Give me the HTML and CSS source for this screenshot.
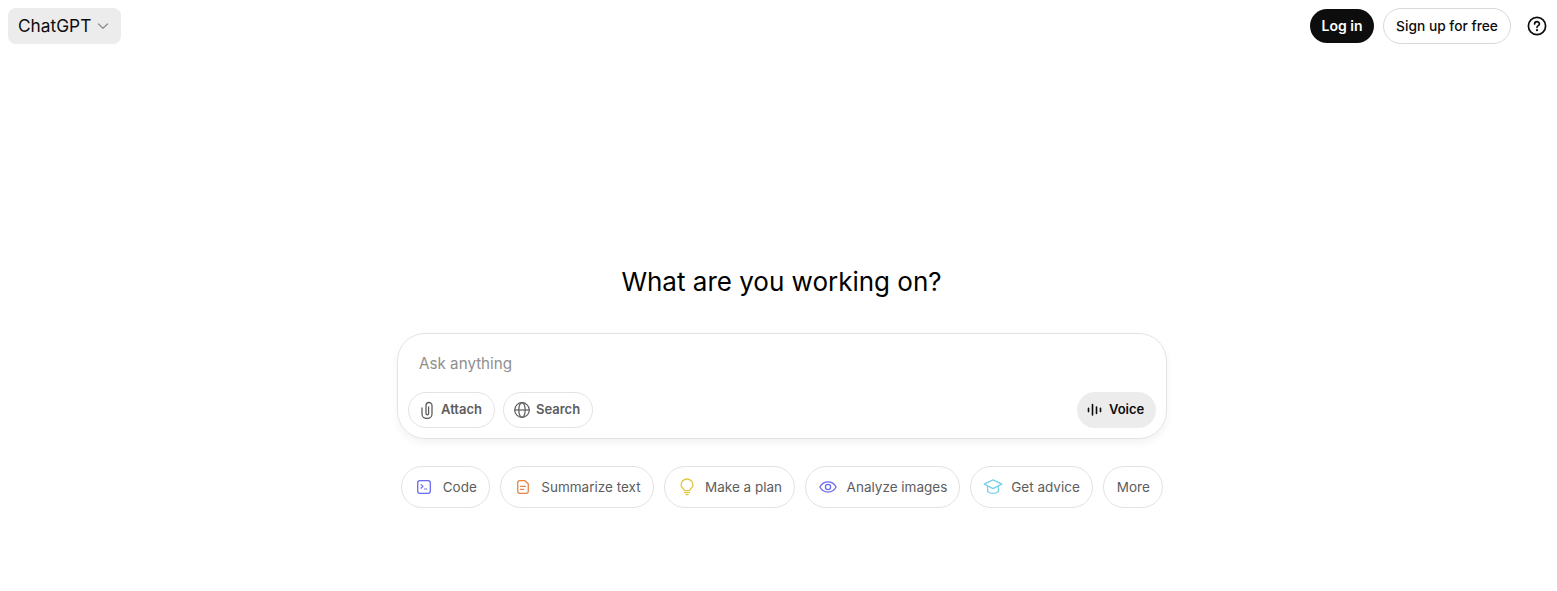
FILE: index.html
```html
<!DOCTYPE html>
<html lang="en">
<head>
  <meta charset="UTF-8">
  <title>ChatGPT</title>
  <link rel="stylesheet" href="styles.css">
</head>
<body>

  <header class="topbar">
    <div class="model-btn">
      <span class="label">ChatGPT</span>
      <svg class="chevron" width="12" height="12" viewBox="0 0 12 12" fill="none"><path d="M1.500 4 6 8.300 10.500 4" stroke="#8f8f8f" stroke-width="1.300" stroke-linecap="round" stroke-linejoin="round"/></svg>
    </div>
    <div class="top-actions">
      <button class="login">Log in</button>
      <button class="signup">Sign up for free</button>
      <svg class="help" width="20" height="20" viewBox="0 0 20 20" fill="none">
        <circle cx="10" cy="10" r="8.600" stroke="#0d0d0d" stroke-width="1.700"/>
        <path d="M7.600 8a2.400 2.400 0 0 1 4.800 0c0 1.600-2.400 1.700-2.400 3.300" stroke="#0d0d0d" stroke-width="1.700" stroke-linecap="round"/>
        <circle cx="10" cy="14.200" r="1.100" fill="#0d0d0d"/>
      </svg>
    </div>
  </header>

  <main class="main">
    <h1 class="title">What are you working on?</h1>

    <div class="composer">
      <div class="placeholder">Ask anything</div>
      <div class="composer-row">
        <div class="tools">
          <button class="tool">
            <svg width="18" height="18" viewBox="0 0 18 18" fill="none"><path d="M4 7v6a5 4.500 0 0 0 10 0V4.500a3 3 0 0 0-6 0v8a1.300 1.300 0 0 0 2.600 0V6" stroke="#5d5d5d" stroke-width="1.300" stroke-linecap="round"/></svg>
            <span class="label">Attach</span>
          </button>
          <button class="tool">
            <svg width="18" height="18" viewBox="0 0 18 18" fill="none"><circle cx="9" cy="9" r="7.300" stroke="#5d5d5d" stroke-width="1.200"/><ellipse cx="9" cy="9" rx="3.200" ry="7.300" stroke="#5d5d5d" stroke-width="1.200"/><path d="M1.700 9h14.600" stroke="#5d5d5d" stroke-width="1.200"/></svg>
            <span class="label">Search</span>
          </button>
        </div>
        <button class="voice">
          <svg width="16" height="16" viewBox="0 0 16 16" fill="none"><path d="M1.500 6.400v3.200M5.500 2.500v10.500M9.500 5v6.500M13.500 6.400v3.200" stroke="#0d0d0d" stroke-width="1.600" stroke-linecap="round"/></svg>
          <span class="label">Voice</span>
        </button>
      </div>
    </div>

    <div class="chips">
      <div class="chip">
        <svg width="18" height="18" viewBox="0 0 18 18" fill="none"><rect x="2.700" y="2.700" width="12.600" height="12.600" rx="2.200" stroke="#6a6af4" stroke-width="1.300"/><path d="M6 6.600 8 8.400 6 10.200M9.600 11h2.200" stroke="#6a6af4" stroke-width="1.200" stroke-linecap="round" stroke-linejoin="round"/></svg>
        Code
      </div>
      <div class="chip">
        <svg width="18" height="18" viewBox="0 0 18 18" fill="none"><path d="M5.900 2.700h5.100l3.300 3.300v7.100a2.200 2.200 0 0 1-2.200 2.200H5.900a2.200 2.200 0 0 1-2.200-2.200V4.900A2.200 2.200 0 0 1 5.900 2.700Z" stroke="#e9844a" stroke-width="1.300" stroke-linejoin="round"/><path d="M6.400 8.400h5M6.400 11.400h3.200" stroke="#e9844a" stroke-width="1.200" stroke-linecap="round"/></svg>
        Summarize text
      </div>
      <div class="chip">
        <svg width="18" height="18" viewBox="0 0 18 18" fill="none"><path d="M6.400 12.600c0-1.600-3.400-2.400-3.400-5.600a6 6 0 0 1 12 0c0 3.200-3.400 4-3.400 5.600Z" stroke="#e2c541" stroke-width="1.300" stroke-linejoin="round"/><path d="M6.600 14.700h4.800M8 16.700h2" stroke="#e2c541" stroke-width="1.300" stroke-linecap="round"/></svg>
        Make a plan
      </div>
      <div class="chip">
        <svg width="18" height="18" viewBox="0 0 18 18" fill="none"><path d="M.9 9C2.600 5.800 5.500 3.900 9 3.900s6.400 1.900 8.100 5.100c-1.700 3.200-4.600 5.100-8.100 5.100S2.600 12.200.9 9Z" stroke="#6a6af4" stroke-width="1.300" stroke-linejoin="round"/><circle cx="9" cy="9" r="2.600" stroke="#6a6af4" stroke-width="1.300"/></svg>
        Analyze images
      </div>
      <div class="chip chip-cap">
        <svg width="20" height="18" viewBox="0 0 20 18" fill="none"><path d="M10 1.800 18.800 6.200 10 10.600 1.200 6.200Z" stroke="#76d0eb" stroke-width="1.300" stroke-linejoin="round"/><path d="M4.600 8.600v4.800c1.500 1.300 3.300 2 5.400 2s3.900-.7 5.400-2V8.600" stroke="#76d0eb" stroke-width="1.300" stroke-linecap="round"/></svg>
        Get advice
      </div>
      <div class="chip">More</div>
    </div>
  </main>

</body>
</html>
```

FILE: styles.css
```css
* {
  box-sizing: border-box;
}

body {
  font-family: Inter, "Liberation Sans", sans-serif;
  margin: 0;
  height: 591px;
  overflow: hidden;
  background-color: #ffffff;
  color: #0d0d0d;
}

button {
  font-family: inherit;
  padding: 0;
  cursor: pointer;
}

svg {
  flex-shrink: 0;
}

.label {
  margin-bottom: 2px;
}

.topbar {
  display: flex;
  justify-content: space-between;
  align-items: center;
  height: 52px;
  padding: 0 10px 0 8px;
}

.model-btn {
  display: flex;
  align-items: center;
  gap: 6px;
  width: 113px;
  height: 36px;
  padding: 0 0 0 10px;
  background-color: #ececec;
  border-radius: 8px;
  font-size: 17.3px;
}

.top-actions {
  display: flex;
  align-items: center;
}

.login {
  width: 64px;
  height: 34px;
  padding-bottom: 2px;
  border: none;
  border-radius: 17px;
  background-color: #0d0d0d;
  color: #ffffff;
  font-size: 14px;
  font-weight: 600;
}

.signup {
  width: 128px;
  height: 36px;
  margin-left: 9px;
  border: 1px solid #d9d9d9;
  border-radius: 18px;
  background-color: #ffffff;
  color: #0d0d0d;
  font-size: 13.75px;
  font-weight: 500;
}

.help {
  margin-left: 16px;
}

.main {
  display: flex;
  flex-direction: column;
  align-items: center;
  padding-top: 211px;
  padding-left: 7px;
}

.title {
  margin: 0 0 0 -1px;
  font-size: 26px;
  line-height: 38px;
  font-weight: 400;
  color: #000000;
}

.composer {
  width: 770px;
  height: 106px;
  margin-top: 32px;
  padding: 10px;
  border: 1px solid #e3e3e3;
  border-radius: 28px;
  box-shadow: 0 4px 8px rgba(0, 0, 0, 0.05);
  display: flex;
  flex-direction: column;
  justify-content: space-between;
}

.placeholder {
  padding: 10px 0 0 11px;
  font-size: 15.2px;
  line-height: 20px;
  color: #8f8f8f;
}

.composer-row {
  display: flex;
  justify-content: space-between;
}

.tools {
  display: flex;
  gap: 8px;
}

.tool,
.voice {
  display: flex;
  align-items: center;
  height: 36px;
  border-radius: 18px;
  font-size: 13px;
  font-weight: 600;
}

.tool {
  gap: 5px;
  padding: 0 12px 0 9px;
  border: 1px solid #e3e3e3;
  background-color: #ffffff;
  color: #5d5d5d;
}

.voice {
  gap: 6px;
  width: 79px;
  padding-left: 10px;
  border: none;
  background-color: #ececec;
  color: #0d0d0d;
}

.chips {
  display: flex;
  gap: 10px;
  margin-top: 27px;
}

.chip {
  display: flex;
  align-items: center;
  gap: 9.5px;
  height: 42px;
  padding: 0 12px 0 13px;
  border: 1px solid #e3e3e3;
  border-radius: 21px;
  font-size: 13.5px;
  color: #5d5d5d;
}

.chip-cap {
  gap: 8px;
  padding-left: 12px;
}
```
